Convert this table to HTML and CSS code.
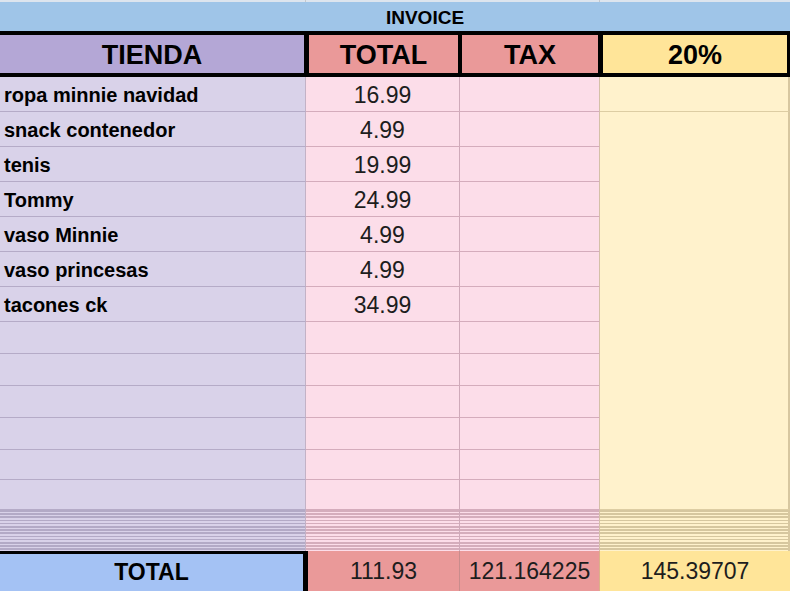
FILE: index.html
```html
<!DOCTYPE html>
<html>
<head>
<meta charset="utf-8">
<link rel="stylesheet" href="styles.css">
</head>
<body>
<div class="sheet">
  <div class="strip"><span class="s s1"></span><span class="s s2"></span><span class="s s3"></span></div>
  <div class="title">INVOICE</div>
  <div class="head">
    <div class="h h1">TIENDA</div>
    <div class="h h2">TOTAL</div>
    <div class="h h3">TAX</div>
    <div class="h h4">20%</div>
  </div>
  <div class="grid">
    <div class="c c1 name">ropa minnie navidad</div><div class="c c2 num">16.99</div><div class="c c3"></div><div class="c c4 first"></div>
    <div class="c c1 name">snack contenedor</div><div class="c c2 num">4.99</div><div class="c c3"></div>
    <div class="c c4 merged"></div>
    <div class="c c1 name">tenis</div><div class="c c2 num">19.99</div><div class="c c3"></div>
    <div class="c c1 name">Tommy</div><div class="c c2 num">24.99</div><div class="c c3"></div>
    <div class="c c1 name">vaso Minnie</div><div class="c c2 num">4.99</div><div class="c c3"></div>
    <div class="c c1 name">vaso princesas</div><div class="c c2 num">4.99</div><div class="c c3"></div>
    <div class="c c1 name">tacones ck</div><div class="c c2 num">34.99</div><div class="c c3"></div>
    <div class="c c1"></div><div class="c c2"></div><div class="c c3"></div>
    <div class="c c1"></div><div class="c c2"></div><div class="c c3"></div>
    <div class="c c1"></div><div class="c c2"></div><div class="c c3"></div>
    <div class="c c1"></div><div class="c c2"></div><div class="c c3"></div>
    <div class="c c1"></div><div class="c c2"></div><div class="c c3"></div>
    <div class="c c1"></div><div class="c c2"></div><div class="c c3"></div>
    <div class="c c1 stripe"></div><div class="c c2 stripe"></div><div class="c c3 stripe"></div><div class="c c4 stripe"></div>
  </div>
  <div class="totals">
    <div class="t t1">TOTAL</div>
    <div class="t t2">111.93</div>
    <div class="t t3">121.164225</div>
    <div class="t t4">145.39707</div>
  </div>
</div>
</body>
</html>
```
FILE: styles.css
```css
* { box-sizing: border-box; }
html, body { margin: 0; padding: 0; background: #ffffff; }
body { font-family: "Liberation Sans", Arial, sans-serif; color: #000; }

.sheet { width: 790px; height: 591px; overflow: hidden; }

.strip { display: flex; height: 2px; background: #dde5ee; }
.strip .s { height: 2px; border-right: 1px solid #c4c8cc; }
.strip .s1 { width: 306px; }
.strip .s2 { width: 294px; }
.strip .s3 { width: 190px; border-right: none; }

.title {
  height: 29px;
  background: #9fc5e8;
  font-weight: bold;
  font-size: 19px;
  text-align: center;
  padding-left: 60px;
  line-height: 32px;
}

.head {
  display: flex;
  background: #000;
  padding: 4px 3px 4px 0;
  height: 46px;
}
.h {
  height: 38px;
  font-weight: bold;
  font-size: 27px;
  display: flex;
  align-items: center;
  justify-content: center;
  padding-top: 2px;
}
.h1 { width: 304px; margin-right: 5px; background: #b4a7d6; }
.h2 { width: 149px; margin-right: 4px; background: #ea9999; }
.h3 { width: 136px; margin-right: 5px; background: #ea9999; }
.h4 { width: 184px; background: #ffe599; }

.grid {
  display: grid;
  grid-template-columns: 306px 154px 140px 190px;
  grid-template-rows: repeat(7, 35px) 32px 32px 32px 32px 30px 30px 41px;
}
.c { border-right: 1px solid; border-bottom: 1px solid; display: flex; align-items: center; }
.c1 { background: #d9d2e9; border-bottom-color: #b5abc7; border-right-color: #c3b2c6; }
.c2 { background: #fcdde9; border-bottom-color: #d4acbc; border-right-color: #cfaaba; }
.c3 { background: #fcdde9; border-bottom-color: #d4acbc; border-right-color: #d4c0a8; }
.c4 { background: #fff2cc; border-bottom-color: #ddcda3; border-right: 2px solid #d7c7a0; grid-column: 4; }
.c4.first { grid-row: 1; }
.c4.merged { grid-row: 2 / 14; }
.c4.stripe { grid-row: 14; }

.name {
  font-weight: bold;
  font-size: 20px;
  padding-left: 4px;
  padding-top: 3px;
  white-space: nowrap;
}
.num {
  font-size: 23px;
  color: #1d1d1d;
  justify-content: center;
  padding-top: 2px;
}

.stripe { border-bottom: none; }
.c1.stripe { background: repeating-linear-gradient(to bottom, #b3aac6 0px, #b3aac6 1.6px, #d9d2e9 1.6px, #d9d2e9 3.2px); }
.c2.stripe, .c3.stripe { background: repeating-linear-gradient(to bottom, #d5adbc 0px, #d5adbc 1.6px, #fcdde9 1.6px, #fcdde9 3.2px); }
.c4.stripe { background: repeating-linear-gradient(to bottom, #d6c79f 0px, #d6c79f 1.6px, #fff2cc 1.6px, #fff2cc 3.2px); }

.totals { display: flex; height: 40px; }
.t {
  display: flex;
  align-items: center;
  justify-content: center;
  font-size: 23px;
  color: #1d1d1d;
}
.t1 {
  width: 308px;
  background: #a4c2f4;
  border-top: 3px solid #000;
  border-right: 5px solid #000;
  font-weight: bold;
  font-size: 23px;
  color: #000;
}
.t2 { width: 152px; background: #ea9999; border-right: 1px solid #c98c8c; }
.t3 { width: 140px; background: #ea9999; border-right: 1px solid #dcb088; }
.t4 { width: 190px; background: #ffe599; }
```
